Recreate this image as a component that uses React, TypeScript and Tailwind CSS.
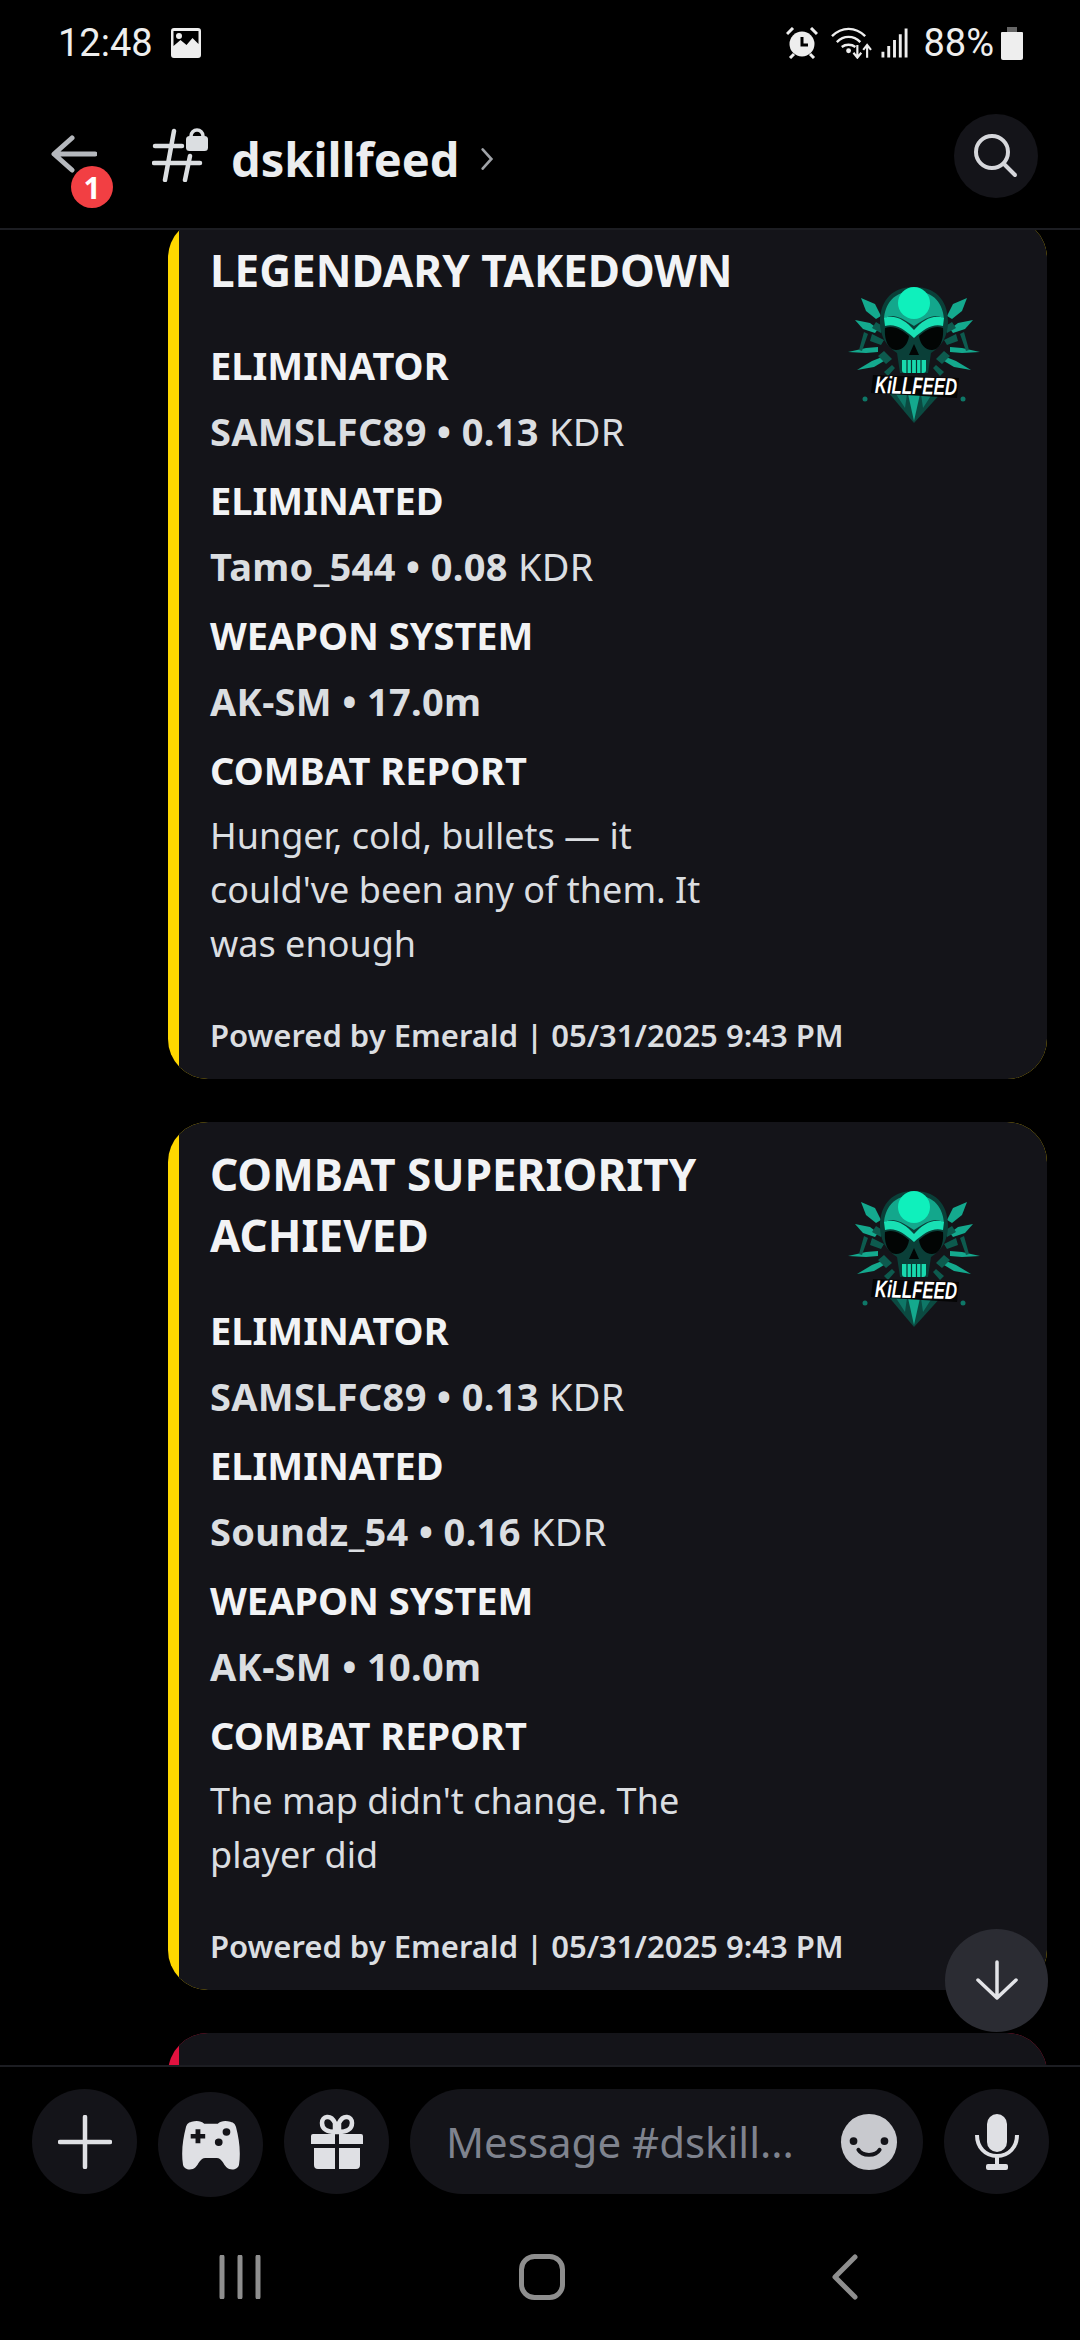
const sans = "font-['Noto_Sans',sans-serif]";

const Logo = () => (
  <svg viewBox="0 0 180 180" className="w-[180px] h-[180px] shrink-0 mt-[20px]">
    {/* dark shield below the banner */}
    <path d="M68 132h54L94 163z" fill="#0b4a41" />
    <path d="M88 134h12l-6 27z" fill="#14a98e" />
    <path d="M76 134l9 14 2-14zM112 134l-9 14-2-14z" fill="#0e7767" />
    <circle cx="45" cy="139" r="2.500" fill="#0e7767" />
    <circle cx="143" cy="139" r="2.500" fill="#0e7767" />
    {/* daggers */}
    <g fill="#14a98e">
      <path d="M41 38l14 6 6 12-5 3-10-8z" />
      <path d="M35 60l15 3 8 6-3 4-12-4z" />
      <path d="M28 92l18-4 12-1v5l-12 1z" />
      <path d="M37 110l15-9 10-4 2 4-10 6z" />
      <path d="M147 38l-14 6-6 12 5 3 10-8z" />
      <path d="M153 60l-15 3-8 6 3 4 12-4z" />
      <path d="M160 92l-18-4-12-1v5l12 1z" />
      <path d="M151 110l-15-9-10-4-2 4 10 6z" />
    </g>
    <g fill="#0d5a4e">
      <path d="M56 62l8 5-3 6-9-5zM52 74l12 6-3 5-11-4zM58 96l6-5 8 8-6 5zM44 72l-5 18 3 1 6-17z" />
      <path d="M132 62l-8 5 3 6 9-5zM136 74l-12 6 3 5 11-4zM130 96l-6-5-8 8 6 5zM144 72l5 18-3 1-6-17z" />
      <path d="M64 112l8-7 3 3-7 8zM124 112l-8-7-3 3 7 8z" />
    </g>
    {/* skull */}
    <path d="M94 27C68 27 60 45 60 62c0 14 6 24 17 31l3 20h28l3-20c11-7 17-17 17-31 0-17-8-35-34-35z" fill="#0a3f38" />
    <path d="M94 31c-21 0-29 14-30 28 8-6 15-3 30 7 15-10 22-13 30-7-1-14-9-28-30-28z" fill="#13a78c" />
    <circle cx="94" cy="43" r="16" fill="#0ff0bc" />
    <path d="M64 58c11-4 21 2 30 12 9-10 19-16 30-12l-1 8c-10-3-19 3-29 12-10-9-19-15-29-12z" fill="#18e0b4" />
    <path d="M65 68c9-3 17 2 24 8-1 8-6 14-13 14-8 0-12-11-11-22z" fill="#020504" />
    <path d="M123 68c-9-3-17 2-24 8 1 8 6 14 13 14 8 0 12-11 11-22z" fill="#020504" />
    <path d="M94 84l5 11h-10z" fill="#020504" />
    <path d="M82 100h24v10a3 3 0 01-3 3H85a3 3 0 01-3-3z" fill="#18d9ae" />
    <path d="M87 100v13M91.500 100v13M96.500 100v13M101 100v13" stroke="#06362f" strokeWidth="1.200" />
    {/* banner */}
    <path d="M53 115l86 3-2 20-86-5z" fill="#050505" />
    <text x="96" y="134" textAnchor="middle" fontSize="24" fontWeight="800" fontStyle="italic" fill="#fff" textLength="82" lengthAdjust="spacingAndGlyphs" fontFamily="Liberation Sans, sans-serif" transform="rotate(1.500 95 125)">KiLLFEED</text>
  </svg>
);

const Field = ({ label, name, stat, unit }: { label: string; name: string; stat: string; unit?: string }) => (
  <div className="flex flex-col gap-[15px]">
    <div className="text-[38px] leading-[48px] pb-[2px] font-bold text-[#f2f3f5]">{label}</div>
    <div className="text-[38px] leading-[50px] tracking-[0.3px] font-bold text-[#dbdee1]">
      {name} • {stat} {unit && <span className="font-normal">{unit}</span>}
    </div>
  </div>
);

const Card = ({ title, second, eliminated, kdr, range, report }: any) => (
  <div className="rounded-[40px] bg-[#ffd700] pl-[11px] shrink-0 overflow-hidden">
    <div className="bg-[#141419] pl-[31px] pt-[22px] pb-[24px]">
      <div className="flex items-start pr-[47px]">
        <div className="flex-1 min-w-0">
          <div className="text-[44px] leading-[61px] font-bold text-[#f2f3f5]">
            {title}
            {second && <br />}
            {second}
          </div>
          <div className="mt-[40px] flex flex-col gap-[20px]">
            <Field label="ELIMINATOR" name="SAMSLFC89" stat="0.13" unit="KDR" />
            <Field label="ELIMINATED" name={eliminated} stat={kdr} unit="KDR" />
            <Field label="WEAPON SYSTEM" name="AK-SM" stat={range} />
            <div className="flex flex-col gap-[13px]">
              <div className="text-[38px] leading-[48px] pb-[2px] font-bold text-[#f2f3f5]">COMBAT REPORT</div>
              <div className="text-[36px] leading-[54px] text-[#dbdee1] w-[520px]">{report}</div>
            </div>
          </div>
        </div>
        <Logo />
      </div>
      <div className="mt-[44px] text-[31px] leading-[40px] font-semibold text-[#dbdee1]">
        Powered by Emerald | 05/31/2025 9:43 PM
      </div>
    </div>
  </div>
);

const Round = ({ children, className = "" }: { children: React.ReactNode; className?: string }) => (
  <div className={`w-[105px] h-[105px] shrink-0 rounded-full bg-[#141419] flex items-center justify-center ${className}`}>
    {children}
  </div>
);

export default function App() {
  return (
    <div className={`relative w-[1080px] h-[2340px] bg-black overflow-hidden flex flex-col ${sans}`}>
      {/* status bar */}
      <div className="h-[80px] shrink-0 pl-[58px] pr-[57px] pt-[21px] flex items-start justify-between text-[#eeeeee] font-['Roboto',sans-serif]">
        <div className="flex items-center gap-[18px]">
          <span className="text-[38px] leading-[44px]">12:48</span>
          <svg viewBox="0 0 30 30" className="w-[30px] h-[30px]">
            <path fillRule="evenodd" d="M3 0h24a3 3 0 013 3v24a3 3 0 01-3 3H3a3 3 0 01-3-3V3a3 3 0 013-3zM2.500 3v15l7-6 6 5 6-7 6 6V3zM8 5a3 3 0 110 6 3 3 0 010-6z" fill="#eee" />
          </svg>
        </div>
        <div className="flex items-center">
          <svg viewBox="0 0 32 32" className="w-[32px] h-[32px]">
            <circle cx="16" cy="17" r="12.500" fill="#eee" />
            <path d="M16 10v8h6" stroke="#000" strokeWidth="3" fill="none" />
            <path d="M1 7l6-6M31 7l-6-6M4 31l4-4M28 31l-4-4" stroke="#eee" strokeWidth="3" />
          </svg>
          <svg viewBox="0 0 42 32" className="w-[41px] h-[32px] ml-[13px]">
            <path d="M1 9c10-10 24-10 34 0M6 15c7-7 17-7 24 0M11 20c4-3 10-3 14 0" stroke="#eee" strokeWidth="2.500" fill="none" />
            <circle cx="18" cy="24" r="2.500" fill="#eee" />
            <path d="M27 18v12M23 26l4 5 4-5M37 31V19M33 23l4-5 4 5" stroke="#eee" strokeWidth="2.200" fill="none" />
          </svg>
          <svg viewBox="0 0 28 30" className="w-[27px] h-[30px] ml-[9px]">
            <path d="M2 30v-6M8 30V18M14 30V12M20 30V6M26 30V0" stroke="#eee" strokeWidth="3" />
          </svg>
          <span className="text-[38px] leading-[44px] ml-[15px]">88%</span>
          <svg viewBox="0 0 22 33" className="w-[22px] h-[33px] ml-[7px]">
            <path d="M6 0h10v5H6z" fill="#666" />
            <path d="M1 5h20a1 1 0 011 1v25a2 2 0 01-2 2H2a2 2 0 01-2-2V6a1 1 0 011-1z" fill="#eee" />
          </svg>
        </div>
      </div>

      {/* channel header */}
      <div className="h-[150px] shrink-0 border-b-[2px] border-[#1c1d22] relative z-10 bg-black pl-[51px] pr-[42px] flex items-center">
        <div className="relative w-[46px] h-[38px] mr-[55px]">
          <svg viewBox="0 0 46 38" className="w-[46px] h-[38px]">
            <path d="M21 3L3 19l18 16M4 19h40" stroke="#b5b8bd" strokeWidth="5" strokeLinecap="round" strokeLinejoin="round" fill="none" />
          </svg>
          <div className="absolute left-[20px] top-[31px] w-[42px] h-[42px] rounded-full bg-[#f23f43] flex items-center justify-center text-[30px] font-bold text-white">
            1
          </div>
        </div>
        <svg viewBox="0 0 56 55" className="w-[56px] h-[55px] mr-[23px]">
          <path d="M22 4l-9 49M38 29l-5 24M3 19h27M2 36h46" stroke="#dbdee1" strokeWidth="4.500" strokeLinecap="round" fill="none" />
          <path d="M39 9a6 6 0 0112 0" stroke="#dbdee1" strokeWidth="3.500" fill="none" />
          <rect x="34" y="9" width="22" height="15" rx="3.500" fill="#dbdee1" />
        </svg>
        <span className="text-[47px] leading-[60px] mt-[10px] font-bold text-[#ebedef]">dskillfeed</span>
        <svg viewBox="0 0 16 28" className="w-[14px] h-[26px] ml-[20px] mt-[10px]">
          <path d="M3 3l10 11L3 25" stroke="#a0a3a8" strokeWidth="3" strokeLinecap="round" fill="none" />
        </svg>
        <div className="ml-auto mt-[4px] w-[84px] h-[84px] rounded-full bg-[#141419] flex items-center justify-center">
          <svg viewBox="0 0 44 44" className="w-[44px] h-[44px]">
            <circle cx="18" cy="18" r="16" stroke="#d6d7db" strokeWidth="4" fill="none" />
            <path d="M30 30l11 11" stroke="#d6d7db" strokeWidth="4" strokeLinecap="round" />
          </svg>
        </div>
      </div>

      {/* messages */}
      <div className="flex-1 overflow-hidden pl-[168px] pr-[33px] -mt-[12px] flex flex-col gap-[43px]">
        <Card
          title="LEGENDARY TAKEDOWN"
          eliminated="Tamo_544"
          kdr="0.08"
          range="17.0m"
          report="Hunger, cold, bullets — it could've been any of them. It was enough"
        />
        <Card
          title="COMBAT SUPERIORITY"
          second="ACHIEVED"
          eliminated="Soundz_54"
          kdr="0.16"
          range="10.0m"
          report="The map didn't change. The player did"
        />
        <div className="rounded-[40px] bg-[#e0123f] pl-[11px] shrink-0 overflow-hidden">
          <div className="bg-[#141419] h-[100px]" />
        </div>
      </div>

      <div className="absolute left-[945px] top-[1929px] w-[103px] h-[103px] rounded-full bg-[#2b2c33] flex items-center justify-center">
        <svg viewBox="0 0 44 44" className="w-[44px] h-[44px]">
          <path d="M22 3v36M3 21l19 18 19-18" stroke="#e3e4e8" strokeWidth="3.500" strokeLinecap="round" strokeLinejoin="round" fill="none" />
        </svg>
      </div>

      {/* composer */}
      <div className="h-[275px] shrink-0 border-t-[2px] border-[#1c1d22] bg-black relative z-10">
        <div className="h-[158px] pl-[32px] pr-[31px] pt-[22px] flex items-start gap-[21px]">
          <Round>
            <svg viewBox="0 0 54 54" className="w-[54px] h-[54px]">
              <path d="M27 2v50M2 27h50" stroke="#dfe0e4" strokeWidth="4.500" strokeLinecap="round" />
            </svg>
          </Round>
          <Round className="mt-[3px]">
            <svg viewBox="0 0 60 54" className="w-[58px] h-[50px]" preserveAspectRatio="none">
              <path fillRule="evenodd" d="M10 2c5-2 10-1 13 2h14c3-3 8-4 13-2 4 1 5 3 6 6 3 12 5 26 3 40-1 6-9 7-13 3-3-3-5-10-10-10H24c-5 0-7 7-10 10-4 4-12 3-13-3C-1 34 1 20 4 8c1-3 2-5 6-6zM14 10v5H9v5h5v5h5v-5h5v-5h-5v-5zM46 9a4 4 0 100 8 4 4 0 000-8zM38 20a4 4 0 100 8 4 4 0 000-8z" fill="#dfe0e4" />
            </svg>
          </Round>
          <Round>
            <svg viewBox="0 0 54 56" className="w-[54px] h-[56px]">
              <path d="M25 18c-8 0-13-3-13-9 0-7 9-9 13 0zM29 18c8 0 13-3 13-9 0-7-9-9-13 0z" stroke="#dfe0e4" strokeWidth="4.500" fill="none" />
              <path d="M3 20h22v10H1v-8a2 2 0 012-2zM29 20h22a2 2 0 012 2v8H29zM4 34h21v21H8a4 4 0 01-4-4zM29 34h21v17a4 4 0 01-4 4H29z" fill="#dfe0e4" />
            </svg>
          </Round>
          <div className="w-[513px] h-[105px] rounded-full bg-[#141419] shrink-0 pl-[36px] pr-[25px] flex items-center justify-between">
            <span className="text-[42px] text-[#7f838e] whitespace-nowrap">Message #dskill...</span>
            <svg viewBox="0 0 60 60" className="w-[58px] h-[58px] shrink-0">
              <circle cx="30" cy="30" r="29" fill="#c8c9ce" />
              <circle cx="14" cy="29" r="4" fill="#141419" />
              <circle cx="46" cy="29" r="4" fill="#141419" />
              <path d="M19 38c4 7 18 7 22 0" stroke="#141419" strokeWidth="4" strokeLinecap="round" fill="none" />
            </svg>
          </div>
          <Round>
            <svg viewBox="0 0 44 56" className="w-[44px] h-[56px]">
              <rect x="12" y="0" width="20" height="38" rx="10" fill="#dfe0e4" />
              <path d="M2 21c0 12 8 21 20 21s20-9 20-21" stroke="#dfe0e4" strokeWidth="4" fill="none" />
              <path d="M22 42v9" stroke="#dfe0e4" strokeWidth="4" />
              <rect x="11" y="50" width="22" height="6" rx="2" fill="#dfe0e4" />
            </svg>
          </Round>
        </div>
        {/* nav bar */}
        <div className="h-[104px] pl-[219px] flex items-center">
          <svg viewBox="0 0 42 44" className="w-[42px] h-[44px]">
            <path d="M3 2v40M21 2v40M39 2v40" stroke="#8e8e8e" strokeWidth="5" strokeLinecap="round" />
          </svg>
          <svg viewBox="0 0 46 46" className="w-[46px] h-[46px] ml-[258px]">
            <rect x="2.500" y="2.500" width="41" height="41" rx="13" stroke="#8e8e8e" strokeWidth="5" fill="none" />
          </svg>
          <svg viewBox="0 0 26 46" className="w-[26px] h-[46px] ml-[267px]">
            <path d="M23 3L3 23l20 20" stroke="#8e8e8e" strokeWidth="5" strokeLinecap="round" strokeLinejoin="round" fill="none" />
          </svg>
        </div>
      </div>
    </div>
  );
}
